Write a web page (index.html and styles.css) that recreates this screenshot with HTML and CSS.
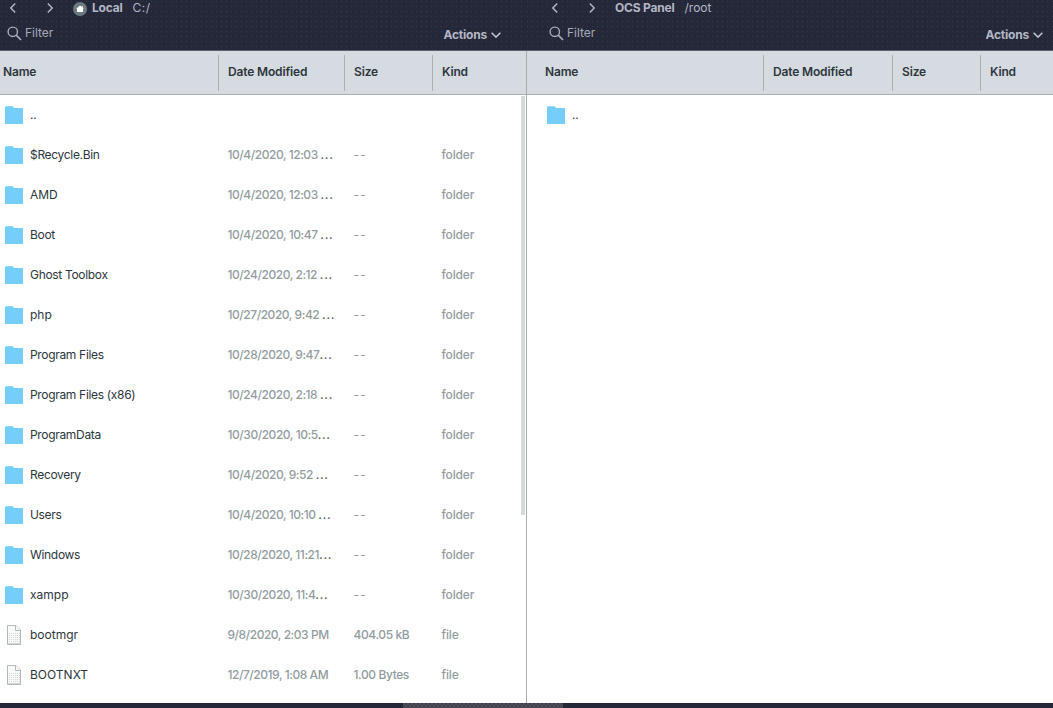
FILE: index.html
```html
<!DOCTYPE html>
<html lang="en">
<head>
<meta charset="utf-8">
<title>File transfer</title>
<link rel="stylesheet" href="styles.css">
</head>
<body>
<svg class="defs" aria-hidden="true">
  <symbol id="folder" viewBox="0 0 18 20"><path d="M0 2.2L1 1.2H7.5L9.2 3H17.2L18 3.8V19H0Z" fill="#75cdfa"/></symbol>
  <symbol id="file" viewBox="0 0 14 20"><path d="M.5 .5H9L13.5 5V19.5H.5Z" fill="#f8f9f9" stroke="#b3b9ba"/><path d="M1 7H13V19H1Z" fill="url(#grain)"/><path d="M8.5 .5V5.5H13.5" fill="#fff" stroke="#b3b9ba"/><path d="M1 18.5H13" stroke="#d3d7d8"/></symbol>
  <pattern id="grain" width="2" height="2" patternUnits="userSpaceOnUse"><path d="M0 0h1v1H0z" fill="#d0d4d5"/></pattern>
  <symbol id="left" viewBox="0 0 8 12"><path d="M6.2 1.5L1.8 6L6.2 10.5" fill="none" stroke="#b0b4c4" stroke-width="1.5"/></symbol>
  <symbol id="right" viewBox="0 0 8 12"><path d="M1.8 1.5L6.2 6L1.8 10.5" fill="none" stroke="#b0b4c4" stroke-width="1.5"/></symbol>
  <symbol id="down" viewBox="0 0 10 6"><path d="M.6 .7L5 5.1L9.4 .7" fill="none" stroke="#c3c7d2" stroke-width="1.5"/></symbol>
  <symbol id="search" viewBox="0 0 15 15"><circle cx="5.8" cy="5.8" r="4.7" fill="none" stroke="#a8adbb" stroke-width="1.4"/><path d="M9.2 9.2L14 14" stroke="#a8adbb" stroke-width="1.7"/></symbol>
  <symbol id="home" viewBox="0 0 14 14"><circle cx="7" cy="7" r="7" fill="#6c797f"/><path d="M7 3.6L10.6 6.6L10 7.2V10H4V7.2L3.4 6.6Z" fill="#fff"/><path d="M8.8 4h1v2h-1z" fill="#fff"/></symbol>
</svg>
<div class="app">
  <section class="pane local">
    <header class="bar">
      <div class="path"><svg class="arrow"><use href="#left"/></svg><svg class="arrow next"><use href="#right"/></svg><svg class="home"><use href="#home"/></svg><b class="host">Local</b><span class="dir">C:/</span></div>
      <div class="tools"><svg class="search"><use href="#search"/></svg><span class="filter">Filter</span><span class="actions">Actions<svg class="down"><use href="#down"/></svg></span></div>
    </header>
    <div class="grid head"><span>Name</span><span>Date Modified</span><span>Size</span><span>Kind</span></div>
    <div class="list">
      <div class="grid row"><span class="name"><svg class="folder"><use href="#folder"/></svg>..</span></div>
      <div class="grid row"><span class="name"><svg class="folder"><use href="#folder"/></svg>$Recycle.Bin</span><span>10/4/2020, 12:03 <i>...</i></span><span class="dash">--</span><span>folder</span></div>
      <div class="grid row"><span class="name wide"><svg class="folder"><use href="#folder"/></svg>AMD</span><span>10/4/2020, 12:03 <i>...</i></span><span class="dash">--</span><span>folder</span></div>
      <div class="grid row"><span class="name"><svg class="folder"><use href="#folder"/></svg>Boot</span><span>10/4/2020, 10:47 <i>...</i></span><span class="dash">--</span><span>folder</span></div>
      <div class="grid row"><span class="name"><svg class="folder"><use href="#folder"/></svg>Ghost Toolbox</span><span>10/24/2020, 2:12 <i>...</i></span><span class="dash">--</span><span>folder</span></div>
      <div class="grid row"><span class="name wide"><svg class="folder"><use href="#folder"/></svg>php</span><span>10/27/2020, 9:42 <i>...</i></span><span class="dash">--</span><span>folder</span></div>
      <div class="grid row"><span class="name"><svg class="folder"><use href="#folder"/></svg>Program Files</span><span>10/28/2020, 9:47<i>...</i></span><span class="dash">--</span><span>folder</span></div>
      <div class="grid row"><span class="name"><svg class="folder"><use href="#folder"/></svg>Program Files (x86)</span><span>10/24/2020, 2:18 <i>...</i></span><span class="dash">--</span><span>folder</span></div>
      <div class="grid row"><span class="name"><svg class="folder"><use href="#folder"/></svg>ProgramData</span><span>10/30/2020, 10:5<i>...</i></span><span class="dash">--</span><span>folder</span></div>
      <div class="grid row"><span class="name"><svg class="folder"><use href="#folder"/></svg>Recovery</span><span>10/4/2020, 9:52 <i>...</i></span><span class="dash">--</span><span>folder</span></div>
      <div class="grid row"><span class="name"><svg class="folder"><use href="#folder"/></svg>Users</span><span>10/4/2020, 10:10 <i>...</i></span><span class="dash">--</span><span>folder</span></div>
      <div class="grid row"><span class="name"><svg class="folder"><use href="#folder"/></svg>Windows</span><span>10/28/2020, 11:21<i>...</i></span><span class="dash">--</span><span>folder</span></div>
      <div class="grid row"><span class="name wide"><svg class="folder"><use href="#folder"/></svg>xampp</span><span>10/30/2020, 11:4<i>...</i></span><span class="dash">--</span><span>folder</span></div>
      <div class="grid row"><span class="name wide"><svg class="file"><use href="#file"/></svg>bootmgr</span><span>9/8/2020, 2:03 PM</span><span>404.05 kB</span><span>file</span></div>
      <div class="grid row"><span class="name wide"><svg class="file"><use href="#file"/></svg>BOOTNXT</span><span>12/7/2019, 1:08 AM</span><span>1.00 Bytes</span><span>file</span></div>
      <div class="thumb"></div>
    </div>
  </section>
  <section class="pane remote">
    <header class="bar">
      <div class="path"><svg class="arrow"><use href="#left"/></svg><svg class="arrow next"><use href="#right"/></svg><b class="host">OCS Panel</b><span class="dir">/root</span></div>
      <div class="tools"><svg class="search"><use href="#search"/></svg><span class="filter">Filter</span><span class="actions">Actions<svg class="down"><use href="#down"/></svg></span></div>
    </header>
    <div class="grid head"><span>Name</span><span>Date Modified</span><span>Size</span><span>Kind</span></div>
    <div class="list">
      <div class="grid row"><span class="name"><svg class="folder"><use href="#folder"/></svg>..</span></div>
    </div>
  </section>
</div>
<footer class="footer"><div class="handle"></div></footer>
</body>
</html>
```
FILE: styles.css
```css
* { box-sizing: border-box; }
body { margin: 0; width: 1053px; height: 708px; overflow: hidden; font: 12px/16px Inter, "Liberation Sans", sans-serif; color: #2d363d; background: #fff; }
svg { display: block; flex: none; }
.defs { position: absolute; width: 0; height: 0; }
.app { display: grid; grid-template-columns: 526px 527px; height: 703px; }
.pane { display: flex; flex-direction: column; min-width: 0; }

.bar { height: 51px; flex: none; background: radial-gradient(circle at 1.5px 1.5px, #363b4d 0.5px, transparent 0.8px) 0 0 / 5px 5px #252839; border-bottom: 1px solid #5a606c; color: #b3b7c5; }
.path { display: flex; align-items: center; height: 16px; padding-left: 9px; }
.arrow { width: 8px; height: 12px; }
.next { margin-left: 29px; }
.home { width: 14px; height: 14px; margin: 2px 0 0 19px; }
.host { margin-left: 5px; font-weight: 700; letter-spacing: -0.2px; }
.dir { margin-left: 10px; }
.local .dir { letter-spacing: 0.5px; }
.tools { display: flex; height: 34px; padding: 10px 25px 0 7px; }
.search { width: 15px; height: 15px; }
.filter { margin: -1px 0 0 3px; color: #a5aab8; letter-spacing: -0.05px; }
.actions { display: flex; margin: 1px 0 0 auto; font-weight: 700; letter-spacing: -0.2px; }
.down { width: 10px; height: 6px; margin: 5px 0 0 4px; }

.grid { display: grid; grid-template-columns: 218px 126px 88px 1fr; align-items: center; }
.head { height: 44px; flex: none; background: #d6dbe1; border-bottom: 1px solid #a9b0b3; font-weight: 600; letter-spacing: -0.15px; }
.head span { height: 36px; line-height: 34px; padding-left: 9px; border-left: 1px solid #a9b0b3; }
.head span:first-child { border: 0; padding-left: 3px; }
.list { position: relative; flex: 1; overflow: hidden; }
.row { height: 40px; font-weight: 500; color: #929c9f; letter-spacing: -0.15px; }
.row > span { padding-left: 9.5px; white-space: nowrap; }
.row > span:nth-child(2) { letter-spacing: -0.45px; }
.row > span:nth-child(3) { letter-spacing: -0.4px; }
.row > .name { display: flex; align-items: center; padding-left: 5px; font-weight: 400; color: #2d363d; letter-spacing: -0.32px; }
.row > .name.wide { letter-spacing: 0; }
.row > .dash:nth-child(3) { letter-spacing: 1.2px; font-weight: 400; }
.row i { font-style: normal; color: #596367; letter-spacing: 0.7px; }
.folder { width: 18px; height: 20px; margin-right: 7px; }
.file { width: 14px; height: 20px; margin: 0 9px 0 2px; }
.thumb { position: absolute; top: 1px; right: 1px; width: 4px; height: 419px; background: #d5dadc; }

.remote { border-left: 1px solid #a9acb0; }
.remote .bar { margin-left: -1px; padding-left: 1px; }
.remote .path { padding-left: 24px; }
.remote .host { margin-left: 19px; }
.remote .tools { padding-left: 22px; padding-right: 10px; }
.remote .grid { grid-template-columns: 236px 129px 88px 1fr; }
.remote .head span:first-child { padding-left: 18px; }
.remote .row > .name { padding-left: 20px; }

.footer { display: flex; height: 5px; background: #252839; padding-left: 403px; }
.handle { width: 160px; background: conic-gradient(#3f404d 25%, #51515b 0 50%, #3f404d 0 75%, #51515b 0) 0 0 / 4px 4px; }
```
